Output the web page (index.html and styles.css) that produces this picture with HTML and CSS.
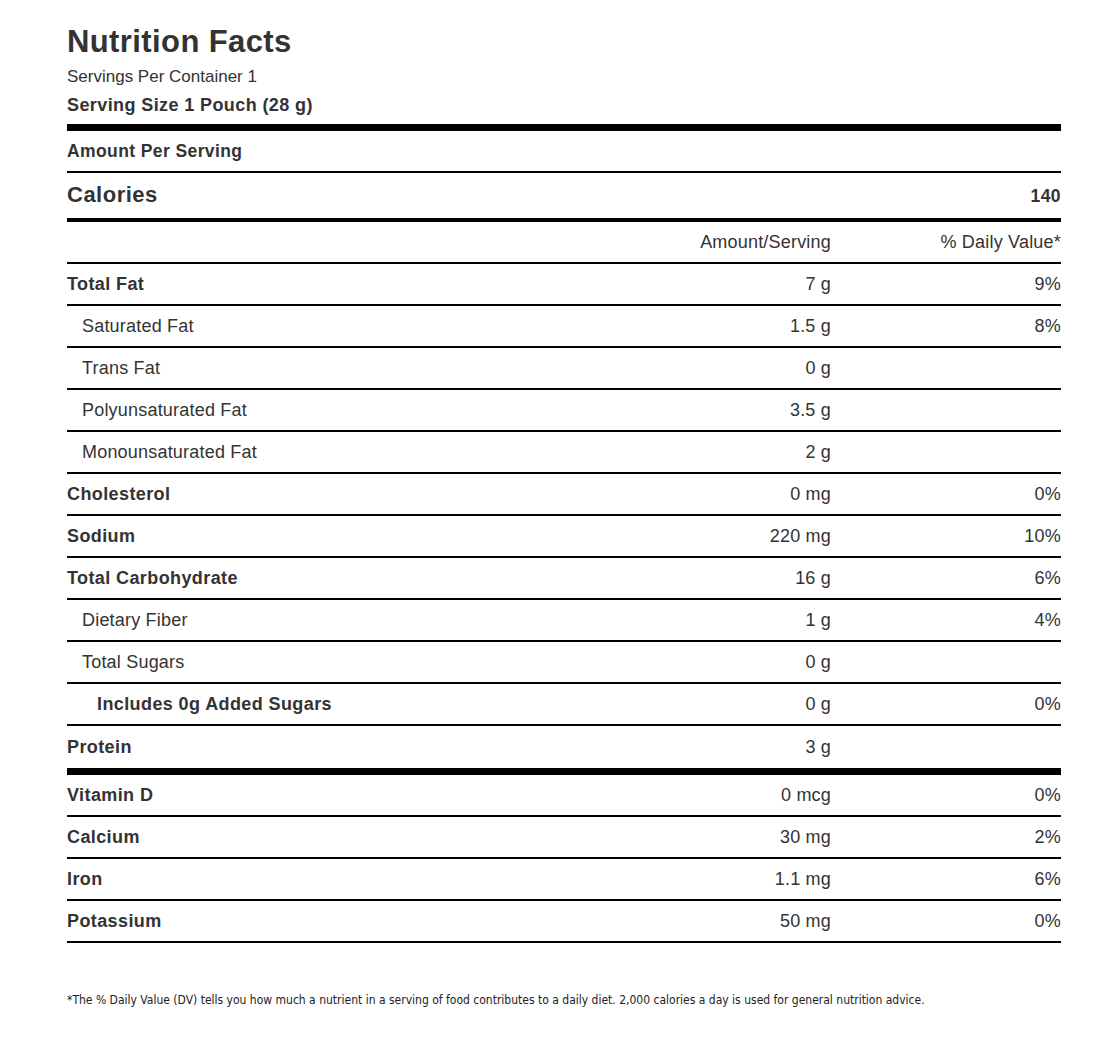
FILE: index.html
```html
<!DOCTYPE html>
<html lang="en">
<head>
<meta charset="utf-8">
<title>Nutrition Facts</title>
<link rel="stylesheet" href="styles.css">
</head>
<body>
<div class="label">
  <header class="label-head">
    <h1 class="title">Nutrition Facts</h1>
    <div class="servings">Servings Per Container 1</div>
    <div class="serving-size">Serving Size 1 Pouch (28 g)</div>
  </header>
  <div class="amount-per">Amount Per Serving</div>
  <div class="calories"><span>Calories</span><span class="cal-val">140</span></div>
  <div class="row col-head"><span></span><span class="amt">Amount/Serving</span><span class="pct">% Daily Value*</span></div>
  <div class="row"><span class="name bold">Total Fat</span><span class="amt">7 g</span><span class="pct">9%</span></div>
  <div class="row"><span class="name sub">Saturated Fat</span><span class="amt">1.5 g</span><span class="pct">8%</span></div>
  <div class="row"><span class="name sub">Trans Fat</span><span class="amt">0 g</span><span class="pct"></span></div>
  <div class="row"><span class="name sub">Polyunsaturated Fat</span><span class="amt">3.5 g</span><span class="pct"></span></div>
  <div class="row"><span class="name sub">Monounsaturated Fat</span><span class="amt">2 g</span><span class="pct"></span></div>
  <div class="row"><span class="name bold">Cholesterol</span><span class="amt">0 mg</span><span class="pct">0%</span></div>
  <div class="row"><span class="name bold">Sodium</span><span class="amt">220 mg</span><span class="pct">10%</span></div>
  <div class="row"><span class="name bold">Total Carbohydrate</span><span class="amt">16 g</span><span class="pct">6%</span></div>
  <div class="row"><span class="name sub">Dietary Fiber</span><span class="amt">1 g</span><span class="pct">4%</span></div>
  <div class="row"><span class="name sub">Total Sugars</span><span class="amt">0 g</span><span class="pct"></span></div>
  <div class="row"><span class="name subsub bold">Includes 0g Added Sugars</span><span class="amt">0 g</span><span class="pct">0%</span></div>
  <div class="row row-thick"><span class="name bold">Protein</span><span class="amt">3 g</span><span class="pct"></span></div>
  <div class="row"><span class="name bold">Vitamin D</span><span class="amt">0 mcg</span><span class="pct">0%</span></div>
  <div class="row"><span class="name bold">Calcium</span><span class="amt">30 mg</span><span class="pct">2%</span></div>
  <div class="row"><span class="name bold">Iron</span><span class="amt">1.1 mg</span><span class="pct">6%</span></div>
  <div class="row"><span class="name bold">Potassium</span><span class="amt">50 mg</span><span class="pct">0%</span></div>
  <p class="footnote">*The % Daily Value (DV) tells you how much a nutrient in a serving of food contributes to a daily diet. 2,000 calories a day is used for general nutrition advice.</p>
</div>
</body>
</html>
```
FILE: styles.css
```css
html, body {
  margin: 0;
  padding: 0;
  background: #fff;
}
body {
  font-family: "Liberation Sans", Arial, sans-serif;
  color: #333;
}
.label {
  width: 994px;
  margin-left: 67px;
  padding-top: 21px;
}
.label-head {
  padding-bottom: 5px;
  border-bottom: 7px solid #000;
}
.title {
  margin: 0;
  font-size: 31px;
  line-height: 42px;
  font-weight: 700;
  letter-spacing: 0.4px;
}
.servings {
  font-size: 17px;
  line-height: 28px;
}
.serving-size {
  font-size: 18px;
  line-height: 28px;
  font-weight: 700;
  letter-spacing: 0.4px;
}
.amount-per {
  font-size: 17.5px;
  font-weight: 700;
  line-height: 40px;
  border-bottom: 2px solid #000;
  letter-spacing: 0.4px;
}
.calories {
  display: flex;
  justify-content: space-between;
  align-items: baseline;
  font-size: 22px;
  font-weight: 700;
  line-height: 44px;
  border-bottom: 4px solid #000;
  letter-spacing: 0.5px;
}
.cal-val {
  font-size: 17.5px;
  letter-spacing: 0.4px;
}
.row {
  display: grid;
  grid-template-columns: 1fr 200px 230px;
  align-items: center;
  font-size: 18px;
  line-height: 40px;
  border-bottom: 2px solid #000;
  letter-spacing: 0.2px;
}
.amt, .pct {
  text-align: right;
}
.bold {
  font-weight: 700;
  letter-spacing: 0.4px;
}
.sub {
  padding-left: 15px;
}
.subsub {
  padding-left: 30px;
}
.row-thick {
  line-height: 42px;
  border-bottom: 7px solid #000;
}
.footnote {
  margin: 49px 0 0;
  font-family: "DejaVu Sans Condensed", "DejaVu Sans", sans-serif;
  font-size: 12px;
  line-height: 16px;
  color: #222;
}
```
